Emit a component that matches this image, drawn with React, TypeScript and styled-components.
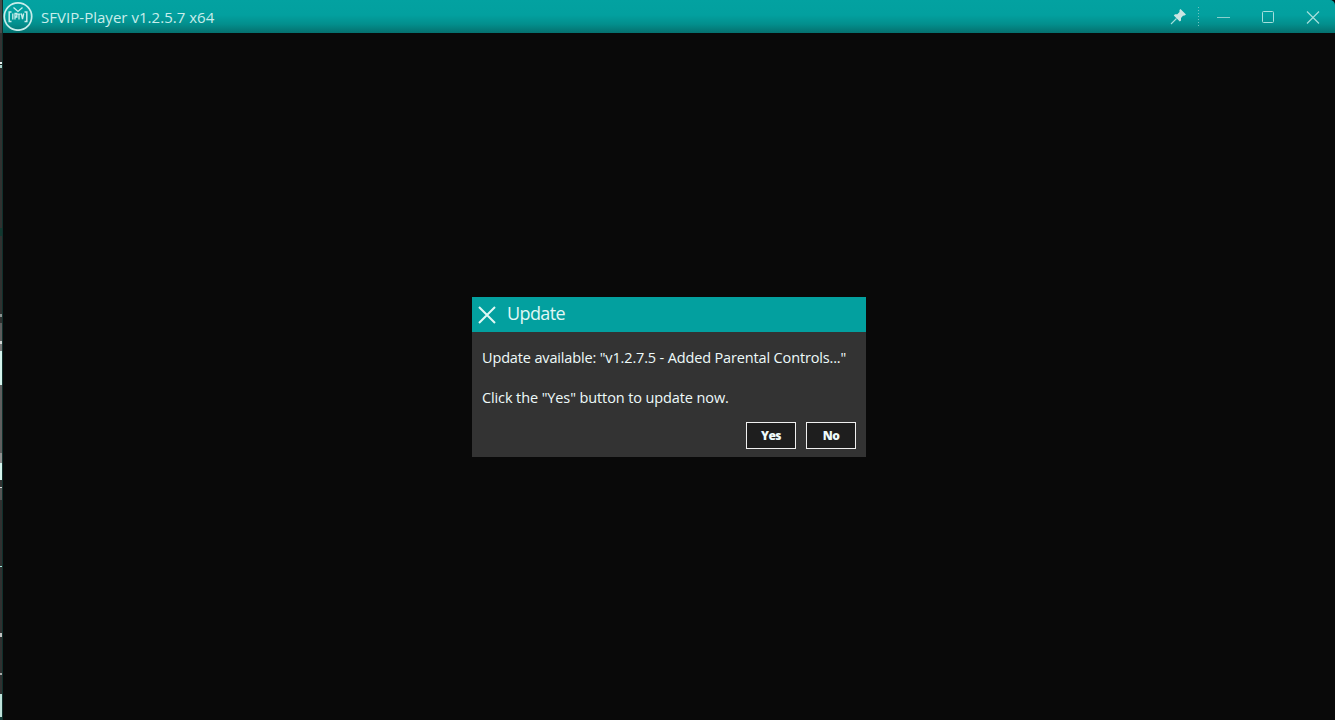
import React from "react";
import styled, { createGlobalStyle } from "styled-components";

const GlobalStyle = createGlobalStyle`
  * { box-sizing: border-box; }
  html, body { margin: 0; background: #090909; overflow: hidden; }
`;

const Desktop = styled.div`
  display: flex;
  width: 100vw;
  height: 100vh;
  background: #090909;
  font-family: "Open Sans", "Noto Sans", sans-serif;
  color: #eefafa;
`;

const BackdropEdge = styled.div`
  flex: none;
  width: 3px;
  border-right: 1px solid #10302c;
  background: linear-gradient(
    #4a4a4a 0 33px, #333 33px 62px, #e8f4f2 62px 64px, #222 64px 65px, #a9cfc8 65px 68px,
    #303130 68px 228px, #12382f 228px 236px, #303130 236px 314px, #8a918f 314px 317px,
    #303130 317px 323px, #5c5c5c 323px 341px, #cfd3d2 341px 344px, #777 344px 351px,
    #d4f3ec 351px 385px, #5f5f5f 385px 453px, #8f8f8f 453px 463px, #d4f3ec 463px 480px,
    #333 480px 487px, #d8d8d8 487px 488px, #555 488px 500px, #303030 500px 566px,
    #a5e8dc 566px 567px, #303030 567px 633px, #c0c0c0 633px 637px, #303030 637px 673px,
    #aaa 673px 675px, #303030 675px 694px, #bfe2da 694px 717px, #173d38 717px
  );
`;

const Window = styled.div`
  flex: 1;
  display: flex;
  flex-direction: column;
  min-width: 0;
`;

const TitleBar = styled.header`
  flex: none;
  display: flex;
  align-items: center;
  height: 33px;
  border-radius: 0 5px 0 0;
  background: linear-gradient(#03a2a1 0, #03a09f 15px, #038f8d 24px, #05706e 33px);
`;

const Logo = styled.svg`
  flex: none;
  width: 30px;
  height: 30px;
  margin: 0 0 2px 0;
`;

const AppTitle = styled.h1`
  flex: 1;
  margin: 0 0 0 8px;
  font-size: 15px;
  font-weight: 400;
  line-height: 20px;
  letter-spacing: 0.03px;
  white-space: nowrap;
  color: #c8edeb;
`;

const Controls = styled.svg`
  flex: none;
  width: 165px;
  height: 33px;
`;

const Stage = styled.main`
  flex: 1;
  display: flex;
  align-items: flex-start;
  justify-content: center;
  padding-top: 264px;
`;

const Dialog = styled.section`
  display: flex;
  flex-direction: column;
  width: 394px;
  height: 160px;
  background: #333;
`;

const DialogHeader = styled.header`
  display: flex;
  align-items: center;
  height: 35px;
  padding-left: 6px;
  background: #03a09f;
`;

const CloseIcon = styled.svg`
  width: 18px;
  height: 18px;
`;

const DialogTitle = styled.h2`
  margin: 0 0 3px 11px;
  font-size: 18px;
  font-weight: 400;
  line-height: 24px;
  letter-spacing: -0.6px;
  color: #e0f7f5;
`;

const Message = styled.p<{ $tracking: number }>`
  margin: 0;
  font-size: 14.5px;
  line-height: 20px;
  letter-spacing: ${(p) => p.$tracking}px;
  white-space: nowrap;
`;

const DialogBody = styled.div`
  flex: 1;
  display: flex;
  flex-direction: column;
  gap: 20px;
  padding: 16px 10px 0;
`;

const Actions = styled.footer`
  display: flex;
  justify-content: flex-end;
  gap: 10px;
  padding: 0 10px 8px;
`;

const ActionButton = styled.button`
  width: 50px;
  height: 27px;
  padding: 0;
  border: 1px solid #f0f0f0;
  background: #1e1e1e;
  color: #eefafa;
  font: 800 12px/23px "Open Sans", "Noto Sans", sans-serif;
  letter-spacing: -0.6px;
`;

export default function App() {
  return (
    <Desktop>
      <GlobalStyle />
      <BackdropEdge />
      <Window>
        <TitleBar>
          <Logo viewBox="0 0 30 30" fill="none" stroke="#c8edeb">
            <circle cx="15" cy="15.5" r="13.7" strokeWidth="1.7" />
            <path d="M8.500 11H6.200V20.500H8.500M21.500 11h2.300V20.500H21.500" strokeWidth="1.500" />
            <path d="M10.500 6.500 15 10.500l4.500-4" strokeWidth="1.300" />
            <path d="M9.800 12.500v6M12 18.500v-6h1.800v3.500H12M14.500 13.200h3M16 12.500v6M18.300 12.500l1.200 5.500L20.700 12.500" strokeWidth="1.300" />
          </Logo>
          <AppTitle>SFVIP-Player v1.2.5.7 x64</AppTitle>
          <Controls viewBox="1170 0 165 33" fill="none" stroke="#a6dfdc">
            <path d="M1180.500 9 1186 14.500 1184.500 15.500 1183 15.700 1181 18 1181 20.500 1179.800 21.500 1173.800 15.500 1175 14.300 1177.300 14.200 1179.500 12 1179.500 10Z" fill="#cde5e3" stroke="none" />
            <path d="M1176.500 18.500 1171 24" strokeWidth="1.100" />
            <path d="M1198.500 7V27" stroke="#6fc4c1" strokeDasharray="1 2" />
            <path d="M1217 17.500h13" stroke="#8ad0cd" />
            <rect x="1262.500" y="11.500" width="11" height="11" rx="1" />
            <path d="M1307 11.500 1319 23.500M1319 11.500 1307 23.500" strokeWidth="1.200" />
          </Controls>
        </TitleBar>
        <Stage>
          <Dialog role="dialog" aria-label="Update">
            <DialogHeader>
              <CloseIcon viewBox="0 0 18 18" fill="none" stroke="#e0f7f5">
                <path d="M1 1 17 17M17 1 1 17" strokeWidth="2" />
              </CloseIcon>
              <DialogTitle>Update</DialogTitle>
            </DialogHeader>
            <DialogBody>
              <Message $tracking={-0.15}>Update available: "v1.2.7.5 - Added Parental Controls..."</Message>
              <Message $tracking={-0.11}>Click the "Yes" button to update now.</Message>
            </DialogBody>
            <Actions>
              <ActionButton>Yes</ActionButton>
              <ActionButton>No</ActionButton>
            </Actions>
          </Dialog>
        </Stage>
      </Window>
    </Desktop>
  );
}
